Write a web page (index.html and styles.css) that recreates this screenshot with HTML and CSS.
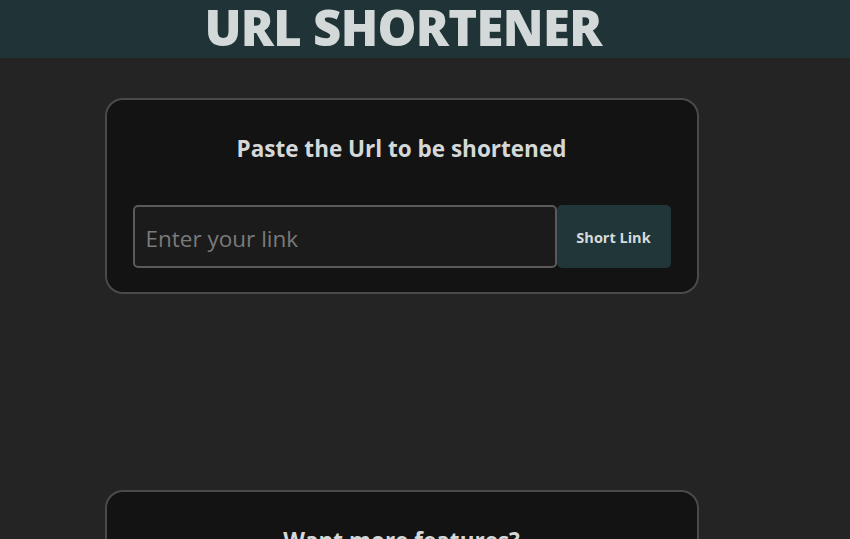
FILE: index.html
```html
<!DOCTYPE html>
<html>
<head>
<meta charset="utf-8">
<link rel="stylesheet" href="styles.css">
</head>
<body>
<header class="topbar">
  <h1 class="brand">URL SHORTENER</h1>
</header>
<main class="wrap">
  <section class="card">
    <h2 class="card-title">Paste the Url to be shortened</h2>
    <form class="row">
      <input class="link-input" type="text" placeholder="Enter your link">
      <button class="btn" type="button">Short Link</button>
    </form>
  </section>
  <section class="card card-more">
    <h2 class="card-title">Want more features?</h2>
  </section>
</main>
</body>
</html>
```
FILE: styles.css
```css
* { box-sizing: border-box; }
html, body { margin: 0; padding: 0; }
body {
  background: #242424;
  font-family: "Open Sans", "Noto Sans", sans-serif;
  color: #d7dbdc;
  overflow: hidden;
}
.topbar {
  background: #203437;
  height: 58px;
  width: 806px;
  display: flex;
  justify-content: center;
  align-items: center;
  padding-bottom: 3px;
  box-shadow: 44px 0 0 #203437;
}
.brand {
  margin: 0;
  font-size: 49px;
  font-weight: 800;
  color: #d3d8d9;
  letter-spacing: -0.7px;
  line-height: 1.1;
}
.wrap {
  width: 803px;
  display: flex;
  flex-direction: column;
  align-items: center;
  padding-top: 40px;
  gap: 196px;
}
.card {
  width: 594px;
  background: #131313;
  border: 2px solid #4a4a4a;
  border-radius: 18px;
  padding: 34px 26px 24px;
}
.card-title {
  margin: 0;
  text-align: center;
  font-size: 22.5px;
  font-weight: 700;
  color: #d4d8d9;
  line-height: 1.3;
}
.row {
  display: flex;
  margin: 42px 0 0;
}
.link-input {
  flex: 1;
  height: 63px;
  background: #1b1b1b;
  border: 2px solid #5a5a5a;
  border-radius: 5px;
  padding: 3px 11px 0;
  font-family: "Open Sans", "Noto Sans", sans-serif;
  font-size: 22.5px;
  color: #ddd;
}
.link-input::placeholder { color: #7a7a7a; }
.btn {
  width: 114px;
  height: 63px;
  background: #213638;
  border: none;
  border-radius: 5px;
  color: #d6dadb;
  font-family: "Open Sans", "Noto Sans", sans-serif;
  font-size: 14.5px;
  font-weight: 700;
  padding-top: 2px;
}
.card-more { height: 120px; }
```
